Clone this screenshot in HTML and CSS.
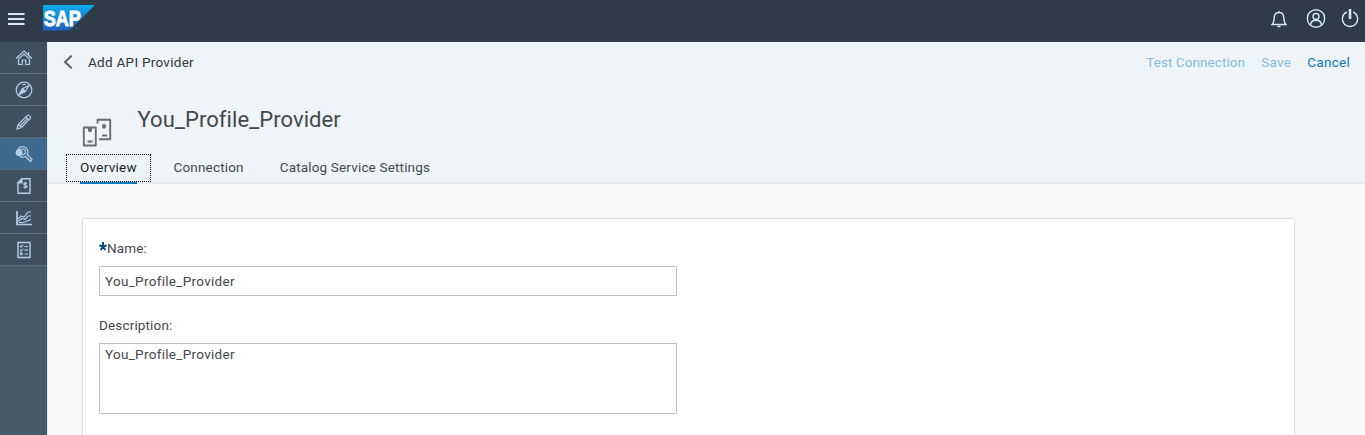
FILE: index.html
```html
<!DOCTYPE html>
<html lang="en">
<head>
<meta charset="utf-8">
<title>Add API Provider</title>
<link rel="stylesheet" href="styles.css">
</head>
<body>
<header class="shell">
  <div class="shell-left">
    <svg class="menu" width="17" height="12" viewBox="0 0 17 12"><path d="M0 1h16.500M0 6h16.500M0 11h16.500" stroke="#d1e8ff" stroke-width="2"/></svg>
    <svg class="logo" width="52" height="26" viewBox="0 0 52 26">
      <defs><linearGradient id="sap" x1="0" y1="0" x2="0" y2="1"><stop offset="0" stop-color="#08aeea"/><stop offset="1" stop-color="#1f5fbd"/></linearGradient></defs>
      <path d="M0 0h52L26.500 25.500H0z" fill="url(#sap)"/>
      <text x="0.800" y="20.600" class="logo-text" textLength="37" lengthAdjust="spacingAndGlyphs">SAP</text>
      <circle cx="34" cy="23.500" r="1.700" fill="#244a73"/>
    </svg>
  </div>
  <div class="shell-right">
    <svg width="16" height="18" viewBox="0 0 16 18" class="shell-icon"><path d="M1 14.500C3 13 3 11 3.200 7.500C3.400 4.300 5.200 2.500 8 2.500s4.600 1.800 4.800 5C13 11 13 13 15 14.500zM8 2.500V1M6.500 16.500h3"/></svg>
    <svg width="20" height="20" viewBox="0 0 20 20" class="shell-icon"><circle cx="10" cy="9.500" r="8.700"/><circle cx="10" cy="7.500" r="3"/><path d="M4.500 16c.3-3.200 2.300-4.700 5.500-4.700s5.200 1.500 5.500 4.700"/></svg>
    <svg width="18" height="20" viewBox="0 0 18 20" class="shell-icon"><path d="M5.800 3a7.600 7.600 0 1 0 6.400 0"/><path d="M9 0v10" stroke-width="2.600"/></svg>
  </div>
</header>
<div class="body">
  <nav class="side">
    <a class="item"><svg viewBox="0 0 18 18"><path d="M1 9.500L9 2l8 7.500M3.500 10L9 5l5.500 5M3.500 10v5.500h3.700V11h3.600v4.500h3.700V10M13.500 3v3"/></svg></a>
    <a class="item"><svg viewBox="0 0 18 18"><circle cx="9" cy="9" r="7.800"/><path d="M4 13.500l3.500-5.800L14 4.500l-3.500 5.800z"/><path d="M4 13.500l3.500-5.800 3 2.600z" fill="#b4cee8"/><path d="M7.500 3.500h3"/></svg></a>
    <a class="item"><svg viewBox="0 0 18 18"><path d="M2 16l1.200-4.500L12.500 2.200c1-.8 3.800 1.800 3 3L6.500 14.500zM11 4l3 3M3.200 11.500l3.300 3M5 13l8-8"/></svg></a>
    <a class="item active"><svg viewBox="0 0 18 18"><path d="M3 4.500C4 2.500 5.500 1.500 7.500 1.500a5.300 5.300 0 0 1 4.600 8l4.900 5-1.500 2-5.200-5c-2 1-4 .7-5.300-.2"/><path d="M6 4.200c3-1 5.200 1.300 4.200 3.800-.7 1.500-2 1.900-3.200 1.500"/><circle cx="4" cy="7.500" r="2.900" fill="#b4cee8"/></svg></a>
    <a class="item"><svg viewBox="0 0 18 18"><path d="M7 1.800h8v14.400H3V5.800z" stroke-width="1.400"/><path d="M3 5.800h4v-4z" fill="#b4cee8"/><path d="M12 6.500c-.8-1-3.300-.8-3.200.7.100 1.500 3.200.8 3.200 2.400 0 1.500-2.500 1.500-3.400.4M10.400 5v6.500"/></svg></a>
    <a class="item"><svg viewBox="0 0 18 18"><path d="M2 2v13.500h15" stroke-width="1.700"/><path d="M3 10l3-3 3 1 4-5h3M3 12.500l4-3 3 1 3-3.500h3M4 13.500h4l3-1 5-2"/></svg></a>
    <a class="item"><svg viewBox="0 0 18 18"><path d="M3 1.500h12v15H3z" stroke-width="1.400"/><path d="M9.500 5.500H13M9.500 9.200H13M9.500 13H13M5 5l1 1 2-2M5 9l1 1 2-2M5 11.500l2.500 2.500M7.500 11.500L5 14"/></svg></a>
  </nav>
  <main class="main">
    <div class="head">
      <div class="bar">
        <svg class="back" width="10" height="14" viewBox="0 0 10 14"><path d="M8.700 .7L2 7l6.700 6.300" fill="none" stroke="#5f6366" stroke-width="2"/></svg>
        <span class="crumb">Add API Provider</span>
        <span class="action dim test">Test Connection</span>
        <span class="action dim save">Save</span>
        <span class="action cancel">Cancel</span>
      </div>
      <div class="title-row">
        <svg class="obj" width="30" height="30" viewBox="0 0 30 30"><g fill="none" stroke="#6b6d6f" stroke-width="1.900" stroke-linejoin="round"><path d="M1.800 9.500h12v18h-12zM15.500 5.500V1.800h12.700v19.400H17M5.500 23.500h5M20 17.500h5"/></g><path d="M6 9.500h4v3.500l-2 1.500-2-1.500z" fill="#6b6d6f"/><ellipse cx="22" cy="8.300" rx="2" ry="2.500" fill="#6b6d6f"/></svg>
        <h1 class="title">You_Profile_Provider</h1>
      </div>
      <div class="tabs">
        <span class="tab selected"><span class="t-over">Overview</span></span>
        <span class="tab t-conn">Connection</span>
        <span class="tab t-cat">Catalog Service Settings</span>
      </div>
    </div>
    <section class="card">
      <label class="label"><svg class="star" width="8" height="9" viewBox="0 0 8 9"><path d="M4 0v4.500L.3 3.300M4 4.500l3.700-1.200M4 4.500L1.700 8M4 4.500L6.300 8" fill="none" stroke="#00468c" stroke-width="1.900"/></svg><span>Name:</span></label>
      <div class="field input">You_Profile_Provider</div>
      <label class="label second">Description:</label>
      <div class="field area">You_Profile_Provider</div>
    </section>
  </main>
</div>
</body>
</html>
```
FILE: styles.css
```css
* { box-sizing: border-box; }
body { margin: 0; height: 435px; overflow: hidden; font: 13.5px/20px Roboto, "Noto Sans", sans-serif; color: #44484b; background: #fafafa; }
svg { display: block; flex: none; }
.shell { height: 42px; background: #2f3c48; display: flex; justify-content: space-between; padding: 0 6px 0 8px; }
.shell-left { display: flex; padding-top: 5px; gap: 18px; }
.menu { margin-top: 8px; }
.logo-text { font: bold 22.5px "Liberation Sans", Arial, sans-serif; fill: #fff; stroke: #fff; stroke-width: 1px; }
.shell-right { display: flex; align-items: center; height: 37px; gap: 18px; }
.shell-right svg:last-child { margin-left: -3px; }
.shell-right svg:first-child { margin-right: 1.5px; }
.shell-icon { fill: none; stroke: #d1e8ff; stroke-width: 1.4; }
.body { display: flex; height: 393px; }
.side { width: 48px; flex: none; background: #475a6a; border-right: 1px solid #e3e6e8; }
.item { display: flex; align-items: center; justify-content: center; height: 32px; background: #3f5161; border-bottom: 1px solid #5a6d7d; padding-left: 1px; }
.item.active { background: #3f6a90; }
.item svg { width: 18px; height: 18px; fill: none; stroke: #b4cee8; stroke-width: 1.2; }
.main { flex: 1; min-width: 0; overflow: hidden; }
.head { height: 142px; background: #eff4f8; border-bottom: 2px solid #e7eaec; }
.bar { display: flex; align-items: center; height: 40px; padding: 0 15px; }
.crumb { margin-left: 15px; margin-right: auto; letter-spacing: .28px; color: #32363a; }
.action { color: #0a7abf; letter-spacing: .08px; }
.cancel { letter-spacing: .28px; }
.save { letter-spacing: .3px; }
.dim { color: #85bcdf; }
.test, .save { margin-right: 16px; }
.title-row { display: flex; height: 72px; padding: 25px 0 0 34px; }
.obj { margin-top: 11px; }
.title { margin: 0 0 0 25.5px; font-size: 22px; line-height: 26px; font-weight: 400; letter-spacing: .08px; color: #44484b; }
.tabs { display: flex; padding-left: 18px; }
.tab { height: 28px; line-height: 27px; letter-spacing: .17px; }
.selected { width: 85px; border: 1px dotted #000; padding: 0 13px; line-height: 25px; color: #222629; letter-spacing: .27px; }
.selected span { display: block; height: 29px; border-bottom: 2px solid #0a78bd; white-space: nowrap; }
.t-conn { margin-left: 22.5px; }
.t-cat { margin-left: 36px; }
.card { margin: 35px 71px 0 35px; height: 230px; padding: 19px 16px; background: #fff; box-shadow: 0 0 2px rgba(0,0,0,.35); }
.label { display: flex; height: 20px; letter-spacing: .15px; }
.star { margin-top: 4px; }
.field { width: 578px; border: 1px solid #bfbfbf; padding: 0 5px; letter-spacing: .3px; }
.input { height: 30px; margin-top: 8px; line-height: 29px; }
.second { margin-top: 19px; }
.area { height: 71px; margin-top: 8px; line-height: 21px; }
```
